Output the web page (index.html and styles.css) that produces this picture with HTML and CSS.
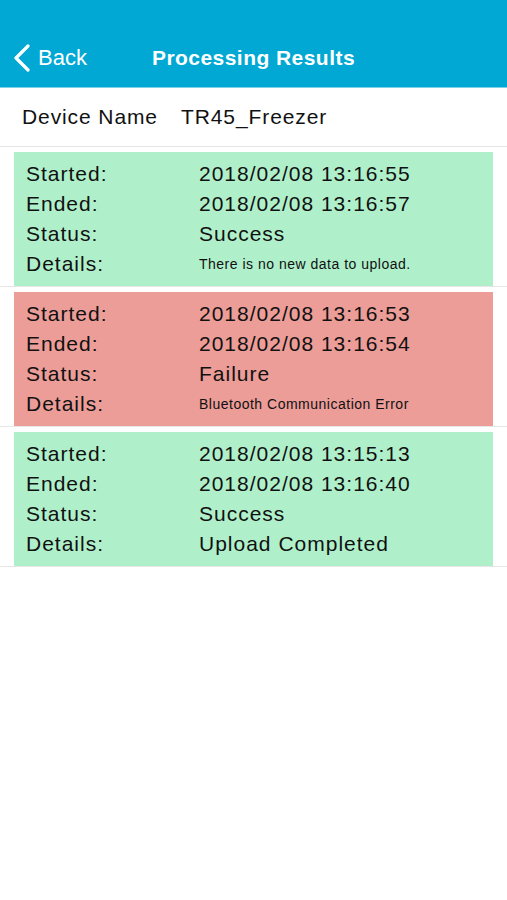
FILE: index.html
```html
<!DOCTYPE html>
<html lang="en">
<head>
    <meta charset="UTF-8">
    <meta name="viewport" content="width=device-width, initial-scale=1.0">
    <title>Processing Results</title>
    <link rel="stylesheet" href="styles.css">
</head>
<body>
    <div class="nav-bar">
        <a href="#" class="back-btn">
            <svg class="chevron" width="20" height="28" viewBox="0 0 20 28">
                <path d="M16 2 L4 14 L16 26" fill="none" stroke="#fff" stroke-width="3.2" stroke-linecap="round" stroke-linejoin="round"/>
            </svg>
            <span>Back</span>
        </a>
        <h1 class="nav-title">Processing Results</h1>
    </div>

    <div class="device-row">
        <span class="device-label">Device Name</span>
        <span class="device-value">TR45_Freezer</span>
    </div>

    <div class="results">
        <div class="result-cell">
            <div class="result-card success">
                <div class="field"><span class="label">Started:</span><span class="value">2018/02/08 13:16:55</span></div>
                <div class="field"><span class="label">Ended:</span><span class="value">2018/02/08 13:16:57</span></div>
                <div class="field"><span class="label">Status:</span><span class="value">Success</span></div>
                <div class="field"><span class="label">Details:</span><span class="value small">There is no new data to upload.</span></div>
            </div>
        </div>
        <div class="result-cell">
            <div class="result-card failure">
                <div class="field"><span class="label">Started:</span><span class="value">2018/02/08 13:16:53</span></div>
                <div class="field"><span class="label">Ended:</span><span class="value">2018/02/08 13:16:54</span></div>
                <div class="field"><span class="label">Status:</span><span class="value">Failure</span></div>
                <div class="field"><span class="label">Details:</span><span class="value small">Bluetooth Communication Error</span></div>
            </div>
        </div>
        <div class="result-cell">
            <div class="result-card success">
                <div class="field"><span class="label">Started:</span><span class="value">2018/02/08 13:15:13</span></div>
                <div class="field"><span class="label">Ended:</span><span class="value">2018/02/08 13:16:40</span></div>
                <div class="field"><span class="label">Status:</span><span class="value">Success</span></div>
                <div class="field"><span class="label">Details:</span><span class="value">Upload Completed</span></div>
            </div>
        </div>
    </div>
</body>
</html>
```

FILE: styles.css
```css
* {
    margin: 0;
    padding: 0;
    box-sizing: border-box;
    font-family: "Liberation Sans", Arial, sans-serif;
}

body {
    background-color: #fff;
    color: #111;
}

.nav-bar {
    height: 88px;
    background-color: #00a8d3;
    border-bottom: 1px solid #7fd0e6;
    display: flex;
    align-items: flex-end;
    padding: 0 0 15px 12px;
    color: #fff;
}

.back-btn {
    display: flex;
    align-items: center;
    gap: 6px;
    color: #fff;
    text-decoration: none;
    font-size: 22px;
    width: 140px;
    height: 28px;
}

.chevron {
    display: block;
}

.nav-title {
    font-size: 21px;
    font-weight: bold;
    line-height: 28px;
    letter-spacing: 0.45px;
}

.device-row {
    height: 59px;
    display: flex;
    align-items: center;
    padding-left: 22px;
    font-size: 21px;
    letter-spacing: 0.9px;
    border-bottom: 1px solid #e2e4e6;
}

.device-label {
    width: 159px;
}

.result-cell {
    padding: 5px 14px 0 14px;
    border-bottom: 1px solid #e6e6e6;
}

.result-card {
    height: 134px;
    padding: 7px 12px;
}

.result-card.success {
    background-color: #aff0cb;
}

.result-card.failure {
    background-color: #ec9d98;
}

.field {
    display: flex;
    align-items: center;
    height: 30px;
    font-size: 21px;
    letter-spacing: 1px;
}

.label {
    width: 173px;
}

.value.small {
    font-size: 14px;
    letter-spacing: 0.5px;
}
```
